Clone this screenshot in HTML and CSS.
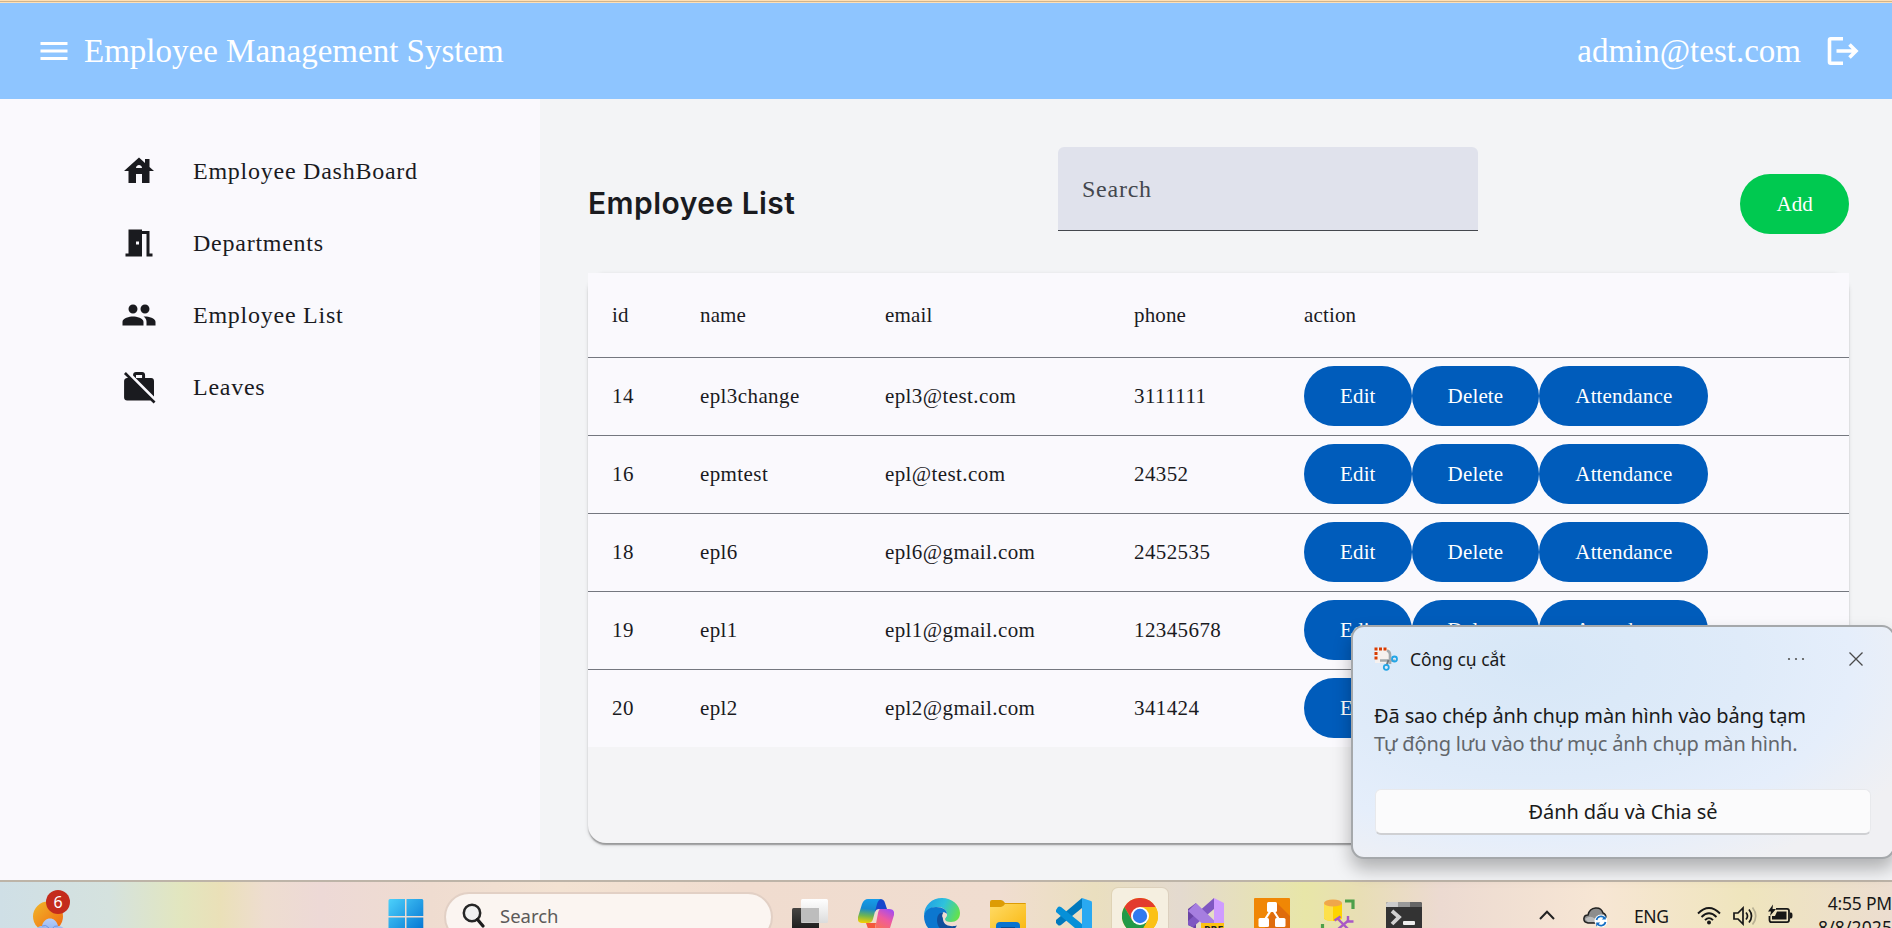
FILE: index.html
```html
<!DOCTYPE html>
<html lang="en">
<head>
<meta charset="utf-8">
<title>Employee Management System</title>
<link rel="stylesheet" href="styles.css">
</head>
<body>
<div class="screen">
  <div class="window-edge"></div>
  <header class="topbar">
    <svg class="icon menu" viewBox="0 0 24 24"><path d="M3 18h18v-2H3v2zm0-5h18v-2H3v2zm0-7v2h18V6H3z"/></svg>
    <span class="brand">Employee Management System</span>
    <span class="user">admin@test.com</span>
    <svg class="icon logout" viewBox="0 0 36 36"><path d="M19 5.8H6.700Q5.500 5.800 5.500 7V29Q5.500 30.200 6.700 30.200H19M12.500 18H31M25.500 11.500 32 18 25.500 24.500"/></svg>
  </header>
  <div class="body">
    <nav class="sidebar">
      <a class="nav-item"><svg class="icon" viewBox="0 0 24 24"><path d="M19 9.3V4h-3v2.6L12 3 2 12h3v8h5v-6h4v6h5v-8h3l-3-2.7zm-9 .7c0-1.1.9-2 2-2s2 .9 2 2h-4z"/></svg><span>Employee DashBoard</span></a>
      <a class="nav-item"><svg class="icon" viewBox="0 0 24 24"><path d="M14 6v15H3v-2h2V3h9v1h5v15h2v2h-4V6h-3zm-4 5v2h2v-2h-2z"/></svg><span>Departments</span></a>
      <a class="nav-item"><svg class="icon" viewBox="0 0 24 24"><path d="M16 11c1.66 0 2.99-1.34 2.99-3S17.66 5 16 5c-1.66 0-3 1.34-3 3s1.34 3 3 3zm-8 0c1.66 0 2.99-1.34 2.99-3S9.66 5 8 5C6.34 5 5 6.34 5 8s1.34 3 3 3zm0 2c-2.33 0-7 1.17-7 3.5V19h14v-2.5c0-2.33-4.67-3.5-7-3.5zm8 0c-.29 0-.62.02-.97.05 1.16.84 1.97 1.97 1.97 3.45V19h6v-2.5c0-2.33-4.67-3.5-7-3.5z"/></svg><span>Employee List</span></a>
      <a class="nav-item"><svg class="icon" viewBox="0 0 24 24"><path d="M23 21.74l-1.46-1.46L7.21 5.95 3.25 1.99 1.99 3.25l2.7 2.7h-.64c-1.11 0-1.99.89-1.99 2l-.01 11c0 1.11.89 2 2 2h15.64L21.74 23 23 21.74zM22 7.95c.05-1.11-.84-2-1.95-1.95h-4V3.95c0-1.11-.89-2-2-1.95h-4c-1.11-.05-2 .84-2 1.95v.32l13.95 14V7.95zM14.05 6H10V3.95h4.05V6z"/></svg><span>Leaves</span></a>
    </nav>
    <main class="content">
      <div class="toolbar">
        <h1 class="title">Employee List</h1>
        <div class="search">Search</div>
        <button class="btn add">Add</button>
      </div>
      <section class="card">
        <table class="grid">
          <colgroup><col class="c-id"><col class="c-name"><col class="c-email"><col class="c-phone"><col></colgroup>
          <thead><tr><th>id</th><th>name</th><th>email</th><th>phone</th><th>action</th></tr></thead>
          <tbody>
            <tr><td>14</td><td>epl3change</td><td>epl3@test.com</td><td>3111111</td><td><div class="actions"><button class="btn">Edit</button><button class="btn">Delete</button><button class="btn">Attendance</button></div></td></tr>
            <tr><td>16</td><td>epmtest</td><td>epl@test.com</td><td>24352</td><td><div class="actions"><button class="btn">Edit</button><button class="btn">Delete</button><button class="btn">Attendance</button></div></td></tr>
            <tr><td>18</td><td>epl6</td><td>epl6@gmail.com</td><td>2452535</td><td><div class="actions"><button class="btn">Edit</button><button class="btn">Delete</button><button class="btn">Attendance</button></div></td></tr>
            <tr><td>19</td><td>epl1</td><td>epl1@gmail.com</td><td>12345678</td><td><div class="actions"><button class="btn">Edit</button><button class="btn">Delete</button><button class="btn">Attendance</button></div></td></tr>
            <tr><td>20</td><td>epl2</td><td>epl2@gmail.com</td><td>341424</td><td><div class="actions"><button class="btn">Edit</button><button class="btn">Delete</button><button class="btn">Attendance</button></div></td></tr>
          </tbody>
        </table>
      </section>
    </main>
  </div>

  <footer class="taskbar">
    <div class="weather">
      <svg width="40" height="40" viewBox="0 0 40 40">
        <defs><linearGradient id="sun" x1="0" y1="0" x2="1" y2="1"><stop offset="0" stop-color="#f0b82a"/><stop offset="1" stop-color="#f2650f"/></linearGradient>
        <linearGradient id="cloud" x1="0" y1="0" x2="0" y2="1"><stop offset="0" stop-color="#b5cdf8"/><stop offset="1" stop-color="#86a9ee"/></linearGradient></defs>
        <circle cx="15" cy="16.500" r="15" fill="url(#sun)"/>
        <path d="M3 38c-1-8 1-12 6-12 2-10 14-10 16 0 6 0 9 5 8 12z" fill="url(#cloud)"/>
        <path d="M9 26q4-2 7 2M25 26q-4-1-6 3" fill="none" stroke="#6f95e6"/>
      </svg>
      <span class="badge">6</span>
    </div>
    <svg class="start" width="36" height="36" viewBox="0 0 36 36">
      <defs><linearGradient id="win" x1="0" y1="0" x2="1" y2="1"><stop offset="0" stop-color="#4cd1fb"/><stop offset="1" stop-color="#006fd0"/></linearGradient></defs>
      <path d="M2 0h15v17H.5V1.500Q.5 0 2 0zM18.500 0H34q1.300 0 1.300 1.500V17H18.500zM.5 18.500H17V35H.5zM18.500 18.500h16.800V35H18.500z" fill="url(#win)"/>
    </svg>
    <div class="pill">
      <svg width="24" height="26" viewBox="0 0 24 26"><circle cx="10" cy="10" r="8.200" fill="#f1f1f1" stroke="#262626" stroke-width="2.500"/><path d="M15.500 16.500 21 23" stroke="#1c1c1c" stroke-width="3.200" stroke-linecap="round"/></svg>
      <span>Search</span>
    </div>
    <div class="apps">
      <svg class="app" viewBox="0 0 36 36"><defs><linearGradient id="tv" x1="0" y1="0" x2="0" y2="1"><stop offset="0" stop-color="#474543"/><stop offset="1" stop-color="#141414"/></linearGradient><linearGradient id="tw" x1="0" y1="0" x2="0" y2="1"><stop offset="0" stop-color="#fff"/><stop offset="1" stop-color="#dcdcdc"/></linearGradient></defs><rect y="10" width="27" height="26" rx="1.500" fill="url(#tv)"/><rect x="9" y="1" width="27" height="24" rx="1.500" fill="url(#tw)"/><path d="M9 10h18v14.500H9z" fill="#bdbdbd"/></svg>
      <svg class="app" viewBox="0 0 36 36"><defs><linearGradient id="cp1" x1=".4" y1="0" x2=".3" y2="1"><stop offset="0" stop-color="#169be8"/><stop offset=".4" stop-color="#1689cf"/><stop offset=".7" stop-color="#6fb552"/><stop offset="1" stop-color="#f6d000"/></linearGradient><linearGradient id="cp2" x1=".8" y1="0" x2=".3" y2="1"><stop offset="0" stop-color="#a44bf0"/><stop offset=".4" stop-color="#ee5aa0"/><stop offset="1" stop-color="#ff7a3c"/></linearGradient></defs><path d="M17 1h5q4 0 5 4l2 6h-8q-3 0-4 3z" fill="#1646cc"/><path d="M8 25h10l-2 11h-4z" fill="#f4583c"/><path d="M10 1h13q-3 1-4 5l-4 15q-1 4-5 4H4q-5 0-4-6L4 6q2-5 6-5z" fill="url(#cp1)"/><path d="M22 11h9q6 0 5 6l-4 13q-2 6-6 6H13q3-1 4-5l3-16q1-4 2-4z" fill="url(#cp2)"/></svg>
      <svg class="app" viewBox="0 0 36 36"><defs><linearGradient id="ed1" x1="0" y1=".3" x2="1" y2=".6"><stop offset="0" stop-color="#219fe5"/><stop offset=".5" stop-color="#2fc2dc"/><stop offset="1" stop-color="#64e24b"/></linearGradient></defs><path d="M0 18C0 7 8 0 18 0s18 7 18 15c0 6-4 9-9 9-4 0-6-1-6-3 0-1 2-2 2-5 0-4-4-7-9-7C7 9 2 12 0 18z" fill="url(#ed1)"/><path d="M0 18c1-6 6-9 12-9 7 0 11 3 11 7-2-2-9-3-9 6 0 6 5 11 11 12-3 2-5 2-8 2C7 36 0 28 0 18z" fill="#0c77cf"/><path d="M19 14.500c-4 0-6 3-6 8 0 7 6 12 12 12 4-1 6-4 8-7-3 1-13 2-14-6-.5-3 1-4 0-7z" fill="#104f9c"/><path d="M19.500 14q4 1 3.300 4-1.800 1.500-2 3-3-1-2.600-4z" fill="#f0ddd0"/></svg>
      <svg class="app" viewBox="0 0 36 36"><defs><linearGradient id="fd" x1="0" y1="0" x2="1" y2="1"><stop offset="0" stop-color="#ffdb66"/><stop offset="1" stop-color="#f9b60c"/></linearGradient></defs><path d="M0 4q0-2 2-2h9q2 0 4 3h20q1 0 1 1v8H0z" fill="#dd9c05"/><path d="M0 9h11q2 0 4-3h21v30H0z" fill="url(#fd)"/><path d="M6 36v-8q0-4 4-4h16q4 0 4 4v8z" fill="#0873cf"/><path d="M11 29h14v7H11z" fill="#084e94"/></svg>
      <svg class="app" viewBox="0 0 36 36"><path d="M26 0v10L5 27q-2 1-3 0l-2-2q-1-2 0-3z" fill="#0079bd"/><path d="M26 36V26L5 9Q3 8 2 9l-2 3q-1 1 0 2z" fill="#0690d8"/><path d="M26 0 35 3q1 0 1 2v26l-1 2-9 3z" fill="#29a9f2"/></svg>
      <span class="active-tile"><svg class="app" viewBox="0 0 36 36"><circle cx="18" cy="18" r="18" fill="#fbc116"/><path d="M18 9h15.600A18 18 0 0 0 2.400 9l7.800 13.500z" fill="#e33b2e"/><path d="M2.400 9A18 18 0 0 0 18 36l7.800-13.500H10.200z" fill="#229a48"/><path d="M18 9h15.600a18 18 0 0 1-15.600 27l7.800-13.500z" fill="#fbc116"/><circle cx="18" cy="18" r="9" fill="#fff"/><circle cx="18" cy="18" r="7.200" fill="#2f7af0"/></svg></span>
      <svg class="app" viewBox="0 0 36 36"><path d="M0 11 8 5v26L0 27z" fill="#6a43a5"/><path d="M26 0v11L5 29l-5-2V23z" fill="#7f57c2"/><path d="M8 5 34 30l-8 6L0 13z" fill="#a67ee0"/><path d="M26 0 36 5v26l-10 5z" fill="#cf9cff"/><path d="M13 25h23v11H13z" fill="#fcc112"/><text x="16" y="35.500" class="pre">PRE</text></svg>
      <svg class="app" viewBox="0 0 36 36"><rect width="36" height="36" rx="1" fill="#f08705"/><path d="M23 5 36 18v18H16L10 28z" fill="#df6c0c"/><path d="M17 12 10 23M19 12l7 11" stroke="#fff" stroke-width="2.200"/><rect x="13" y="4" width="10" height="10" rx="1.500" fill="#fff"/><rect x="4.500" y="20" width="10.500" height="9" rx="1.500" fill="#fff"/><rect x="21" y="20" width="10.500" height="9" rx="1.500" fill="#fff"/></svg>
      <svg class="app" viewBox="0 0 36 36"><path d="M4 5v15c0 4 18 4 18 0V5z" fill="#ffd400"/><path d="M4 5v15q1 3 9 3V5z" fill="#fde04c"/><ellipse cx="13" cy="5" rx="9" ry="3.600" fill="#efa74b"/><path d="M25 3h8v8M2.500 26v10" stroke="#4da04a" stroke-width="3.200" fill="none"/><path d="M17 32 29 22M18 21l12 12" stroke="#a958c6" stroke-width="2.400"/><path d="M14.500 22.500l6-4M28 18v5.500h5.500" stroke="#a958c6" stroke-width="2.400" fill="none"/></svg>
      <svg class="app" viewBox="0 0 36 36"><path d="M0 6q0-2 2-2h32q2 0 2 2v30H0z" fill="#333"/><path d="M0 9V6q0-2 2-2h10v5z" fill="#ccc"/><path d="M12 4h12v5H12z" fill="#999"/><path d="M24 4h10q2 0 2 2v3H24z" fill="#666"/><path d="M6 13l7 6-7 7" stroke="#d2d2d2" stroke-width="3.800" fill="none"/><rect x="17" y="23" width="12" height="4" rx="1" fill="#eee"/></svg>
    </div>
    <div class="tray">
      <svg class="chev" width="16" height="10" viewBox="0 0 16 10"><path d="M1 9 8 1.800 15 9"/></svg>
      <svg class="sync" width="24" height="20" viewBox="0 0 24 20"><path d="M5 16C-1 15 0 8 5 8 7-1 18-1 20 6c4 1 4 9 0 10z" fill="#8d8d8d" stroke="#222" stroke-width="1.500"/><path d="M2 12c6-5 10-1 13 3H5z" fill="#bcbcbc"/><circle cx="18" cy="14" r="6.500" fill="#fff"/><path d="M13.500 13a4.600 4.600 0 0 1 8-2M22.500 15a4.600 4.600 0 0 1-8 2" fill="none" stroke="#1670c4" stroke-width="1.700"/><path d="M22.800 8.500v4h-4zM13.200 19.500v-4h4z" fill="#1670c4"/></svg>
      <span class="lang">ENG</span>
      <svg class="wifi" width="24" height="18" viewBox="0 0 24 18"><path d="M1 6.500Q12-4.500 23 6.500M4.500 10Q12 2.500 19.500 10M8 13.200Q12 9 16 13.200"/><circle cx="12" cy="15.500" r="2"/></svg>
      <svg class="vol" width="24" height="20" viewBox="0 0 24 20"><path d="M1 7h4l5-5v16l-5-5H1zM13 6.500q3 3.500 0 7M16 3.500q5 6.500 0 13"/><path d="M19.500 1.500q6.500 8.500 0 17" opacity=".25"/></svg>
      <svg class="bat" width="25" height="20" viewBox="0 0 25 20"><path d="M8 3.800h11q2 0 2 2v9q0 2.400-2 2.400H3.500q-2 0-2-2.400V11" fill="none" stroke="#171717" stroke-width="1.800"/><path d="M9 6.500h9.500v8H4V11h3zM22 7.500h1q1.500 0 1.500 3t-1.500 3h-1zM5-.5 0 6.500h3L2 11 8 4H4.500z" fill="#171717"/></svg>
      <div class="clock"><span>4:55 PM</span><span class="date">8/8/2025</span></div>
    </div>
  </footer>

  <aside class="toast">
    <div class="toast-head">
      <svg width="24" height="24" viewBox="0 0 24 24"><rect x="1" y="1" width="15" height="15" fill="#f6f1ef"/><path d="M13 3.500q3 1 3 4V17M6 13.500h11q3 0 3-1" stroke="#a3a9ad" stroke-width="2.600" fill="none"/><path d="M14.500 13 12.500 18.500" stroke="#747b80" stroke-width="2"/><path d="M.5.500h3v3h-3zM5 .5h3v3H5zM9.500 .5h3v3h-3zM.5 5h3v3h-3zM.5 9.500h3v3h-3z" fill="#d83b01"/><circle cx="20.500" cy="12" r="2.500" fill="none" stroke="#22a5e6" stroke-width="1.800"/><circle cx="12.300" cy="20.300" r="2.500" fill="none" stroke="#22a5e6" stroke-width="1.800"/></svg>
      <span class="toast-app">Công cụ cắt</span>
      <svg class="dots" width="18" height="4" viewBox="0 0 18 4"><circle cx="2" cy="2" r="1.100"/><circle cx="9" cy="2" r="1.100"/><circle cx="16" cy="2" r="1.100"/></svg>
      <svg class="close" width="16" height="16" viewBox="0 0 16 16"><path d="M1.500 1.500 14.500 14.500M14.500 1.500 1.500 14.500"/></svg>
    </div>
    <p class="toast-title">Đã sao chép ảnh chụp màn hình vào bảng tạm</p>
    <p class="toast-sub">Tự động lưu vào thư mục ảnh chụp màn hình.</p>
    <div class="toast-btn"><span>Đánh dấu và Chia sẻ</span></div>
  </aside>
</div>
</body>
</html>
```
FILE: styles.css
```css
* { box-sizing: border-box; }
body { margin: 0; font-family: "Liberation Serif", "Times New Roman", serif; color: #1a1b1f; }
.screen { position: relative; display: flex; flex-direction: column; width: 1892px; height: 928px; overflow: hidden; background: #f3f4f6; }
.window-edge { height: 3px; flex: none; background: linear-gradient(#ffe0b5 0 1px, #d1b48c 1px 2px, #ffe0b5 2px); }

.icon { width: 36px; height: 36px; flex: none; fill: currentColor; }

.topbar { flex: none; height: 96px; display: flex; align-items: center; padding: 0 32px 0 36px; background: #8ec5ff; color: #fff; font-size: 33px; }
.brand { margin-left: 12px; }
.user { margin-left: auto; margin-right: 23px; }
.logout { fill: none; stroke: #fff; stroke-width: 3.6; }

.body { flex: 1; display: flex; min-height: 0; }
.sidebar { width: 540px; flex: none; background: #faf9fd; padding: 36px 0 0 121px; }
.nav-item { display: flex; align-items: center; height: 72px; gap: 36px; font-size: 24px; letter-spacing: .75px; }

.content { flex: 1; display: flex; flex-direction: column; padding: 48px 43px 37px 48px; background: #f3f4f6; }
.toolbar { display: flex; align-items: center; height: 114px; margin-bottom: 12px; }
.title { margin: -2px 0 0; width: 470px; white-space: nowrap; font: 600 30px "Inter", sans-serif; letter-spacing: .45px; }
.search { align-self: flex-start; width: 420px; height: 84px; padding: 0 24px; line-height: 84px; background: #e0e2ec; border-bottom: 1px solid #44474e; border-radius: 6px 6px 0 0; font-size: 24px; letter-spacing: .75px; color: #44474e; }

.btn { height: 60px; padding: 0 36px; border: 0; border-radius: 30px; background: #005cbb; color: #fff; font: 21px "Liberation Serif", "Times New Roman", serif; letter-spacing: .15px; white-space: nowrap; }
.add { margin-left: auto; background: #00c950; }

.card { flex: 1; border-radius: 18px; background: #f4f4f6; box-shadow: 0 3px 1.5px -1.5px rgba(0,0,0,.2), 0 1.5px 1.5px rgba(0,0,0,.14), 0 1.5px 4.5px rgba(0,0,0,.12); }
.grid { width: 100%; table-layout: fixed; border-collapse: separate; border-spacing: 0; background: #faf9fd; font-size: 21px; }
.grid th, .grid td { padding: 0 0 0 24px; text-align: left; font-weight: 400; border-bottom: 1px solid #74777f; }
.grid th { height: 85px; letter-spacing: .15px; }
.grid td { height: 78px; letter-spacing: .4px; }
.grid tr:last-child td { border-bottom: 0; height: 77px; }
.grid thead tr:last-child th { border-bottom: 1px solid #74777f; }
.c-id { width: 88px; }
.c-name { width: 185px; }
.c-email { width: 249px; }
.c-phone { width: 170px; }
.actions { display: flex; padding-bottom: 1px; }

.taskbar { flex: none; height: 48px; display: flex; border-top: 2px solid #bdb4a8; overflow: hidden; font-family: "Noto Sans", sans-serif; color: #171717;
  background: linear-gradient(90deg, #cfdfe6 0, #d5e2de 110px, #e2e6bf 180px, #eae0b8 220px, #eeddd0 265px, #edd9d6 320px, #efdcd0 430px, #f3e2d2 560px, #f0dccf 740px, #f0ddd0 1000px, #eadfbf 1095px, #e4dacf 1180px, #e8e6a8 1305px, #e8deb5 1360px, #ecdad1 1440px, #f7e6d4 1600px, #efe5bd 1745px, #ecddd0 1892px); }
.weather { position: relative; width: 40px; margin: 18px 0 0 33px; flex: none; }
.badge { position: absolute; left: 13px; top: -10px; width: 24px; height: 24px; border-radius: 50%; background: #c42b1c; color: #fff; font-size: 16px; line-height: 24px; text-align: center; }
.start { flex: none; margin: 17px 0 0 315px; }
.pill { flex: none; display: flex; width: 329px; height: 50px; margin: 10px 0 0 20px; padding: 9px 0 0 16px; gap: 14px; border: 2px solid #e2d0c5; border-radius: 25px; background: #fbf5f1; font-size: 18.5px; line-height: 26px; color: #5c5a59; }
.apps { display: flex; gap: 30px; margin: 16px 0 0 19px; flex: none; }
.app { width: 36px; height: 36px; flex: none; }
.active-tile { width: 56px; height: 60px; margin: -10px -10px 0; padding: 10px; flex: none; border-radius: 6px; background: #f5efe0; box-shadow: 0 0 0 1px rgba(160,130,90,.12); }
.pre { font: 700 10.5px "Noto Sans", sans-serif; fill: #222; }
.tray { flex: 1; display: flex; align-items: flex-start; font-size: 18px; }
.tray svg { flex: none; }
.chev { margin: 28px 0 0 117px; fill: none; stroke: #222; stroke-width: 2; }
.sync { margin: 25px 0 0 28px; }
.lang { width: 35px; margin: 22px 0 0 27px; line-height: 24px; letter-spacing: -.4px; font-size: 17.5px; }
.wifi { margin: 25px 0 0 28px; fill: none; stroke: #171717; stroke-width: 1.9; }
.wifi circle { fill: #171717; stroke: none; }
.vol { margin: 24px 0 0 12px; fill: none; stroke: #171717; stroke-width: 1.7; }
.bat { margin: 23px 0 0 11px; overflow: visible; }
.clock { display: flex; flex-direction: column; align-items: flex-end; flex: 1; margin-top: 9px; line-height: 24px; font-size: 17.5px; letter-spacing: -.2px; white-space: nowrap; }
.date { letter-spacing: .1px; }

.toast { position: absolute; left: 1351px; top: 625px; width: 544px; height: 234px; border: 2px solid #a5a8ab; border-radius: 13px; padding: 13px 24px 0 21px; color: #1a1a1a; font-family: "Noto Sans", sans-serif;
  background: radial-gradient(ellipse 420px 230px at 34% 16%, #d7e7f7 0, #dfebf9 50%, #e5eefb 75%, rgba(240,240,243,0) 100%), #f0f0f3; box-shadow: 0 10px 18px rgba(0,0,0,.28); }
.toast-head { display: flex; align-items: center; height: 38px; }
.toast-app { margin-left: 12px; font-size: 17.5px; letter-spacing: -.05px; white-space: nowrap; }
.dots { margin-left: auto; fill: #555; }
.close { margin: 0 5px 0 43px; fill: none; stroke: #4a4a4a; stroke-width: 1.3; }
.toast p { margin: 0; line-height: 28px; font-size: 20px; letter-spacing: -.12px; white-space: nowrap; }
.toast .toast-title { margin-top: 24px; }
.toast .toast-sub { color: #62666b; letter-spacing: -.16px; }
.toast-btn { display: flex; justify-content: center; align-items: center; height: 46px; width: 496px; margin: 31px 0 0 1px; padding-bottom: 0; border: 1px solid #e8e9ec; border-bottom: 2px solid #cfd0d3; border-radius: 6px; background: #fbfbfc; font-size: 20px; letter-spacing: -.1px; white-space: nowrap; }
```
